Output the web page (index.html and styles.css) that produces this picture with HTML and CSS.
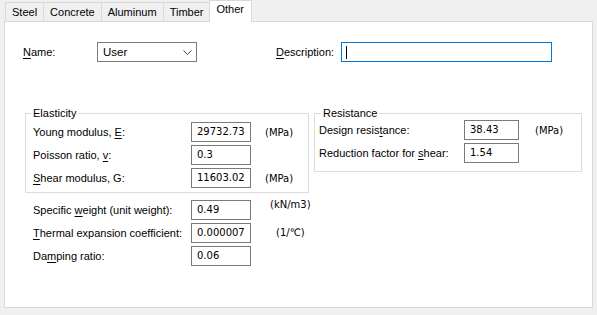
FILE: index.html
```html
<!DOCTYPE html>
<html>
<head>
  <title>Material</title>
  <link rel="stylesheet" href="styles.css">
</head>
<body>
  <div class="tabs">
    <div class="tab">Steel</div>
    <div class="tab">Concrete</div>
    <div class="tab">Aluminum</div>
    <div class="tab">Timber</div>
    <div class="tab active">Other</div>
  </div>

  <div class="panel">
    <div class="top-row">
      <label class="name-label"><u>N</u>ame:</label>
      <div class="select">
        <span>User</span>
        <svg width="9" height="5" viewBox="0 0 9 5"><polyline points="0.5,0.5 4.5,4.5 8.5,0.5" fill="none" stroke="#444" stroke-width="1"/></svg>
      </div>
      <label class="desc-label"><u>D</u>escription:</label>
      <div class="text-input focused"><span class="caret"></span></div>
    </div>

    <div class="groups">
      <fieldset class="group elasticity">
        <legend>Elasticity</legend>
        <div class="field">
          <label>Young modulus, <u>E</u>:</label>
          <div class="box">29732.73</div>
          <span class="unit">(MPa)</span>
        </div>
        <div class="field">
          <label>Poisson ratio, <u>v</u>:</label>
          <div class="box">0.3</div>
        </div>
        <div class="field">
          <label><u>S</u>hear modulus, G:</label>
          <div class="box">11603.02</div>
          <span class="unit">(MPa)</span>
        </div>
      </fieldset>

      <fieldset class="group resistance">
        <legend>Resistance</legend>
        <div class="field">
          <label>Design resis<u>t</u>ance:</label>
          <div class="box">38.43</div>
          <span class="unit">(MPa)</span>
        </div>
        <div class="field">
          <label>Reduction factor for <u>s</u>hear:</label>
          <div class="box">1.54</div>
        </div>
      </fieldset>
    </div>

    <div class="extra">
      <div class="field">
        <label>Specific <u>w</u>eight (unit weight):</label>
        <div class="box">0.49</div>
        <span class="unit unit-kn">(kN/m3)</span>
      </div>
      <div class="field">
        <label><u>T</u>hermal expansion coefficient:</label>
        <div class="box">0.000007</div>
        <span class="unit unit-temp">(1/℃)</span>
      </div>
      <div class="field">
        <label>Da<u>m</u>ping ratio:</label>
        <div class="box">0.06</div>
      </div>
    </div>
  </div>
</body>
</html>
```

FILE: styles.css
```css
body {
  margin: 0;
  background-color: #f0f0f0;
  font-family: "Liberation Sans", Arial, sans-serif;
  font-size: 11px;
  color: #000;
}

u {
  text-decoration-thickness: 1px;
  text-underline-offset: 2px;
}

/* Tabs */
.tabs {
  display: flex;
  align-items: flex-end;
  height: 21px;
  margin-left: 5px;
}

.tab {
  box-sizing: border-box;
  height: 19px;
  padding: 3px 6px 0 6px;
  border-top: 1px solid #d9d9d9;
  border-left: 1px solid #d9d9d9;
  background-color: #f0f0f0;
  font-size: 11px;
}

.tab.active {
  position: relative;
  z-index: 1;
  height: 22px;
  margin-bottom: -1px;
  padding: 2px 7px 0 6px;
  border-right: 1px solid #d9d9d9;
  background-color: #fff;
}

/* Panel */
.panel {
  box-sizing: border-box;
  width: 589px;
  height: 287px;
  margin-left: 4px;
  padding: 20px 0 0 18px;
  background-color: #fff;
  border: 1px solid #d9d9d9;
}

.top-row {
  display: flex;
  align-items: center;
  height: 20px;
}

.name-label {
  width: 74px;
}

.select {
  box-sizing: border-box;
  display: flex;
  align-items: center;
  justify-content: space-between;
  width: 100px;
  height: 20px;
  padding: 0 4px 0 5px;
  border: 1px solid #7a7a7a;
  font-size: 11.5px;
}

.desc-label {
  width: 65px;
  margin-left: 79px;
}

.text-input {
  box-sizing: border-box;
  display: flex;
  align-items: center;
  width: 211px;
  height: 20px;
  padding-left: 4px;
  border: 1px solid #7a7a7a;
}

.text-input.focused {
  border-color: #0078d7;
}

.caret {
  width: 1px;
  height: 13px;
  background-color: #000;
}

/* Group boxes */
.groups {
  display: flex;
  align-items: flex-start;
  margin-top: 44px;
}

.group {
  box-sizing: border-box;
  margin: 0;
  border: 1px solid #dcdcdc;
  min-width: 0;
}

.group legend {
  padding: 0 2px;
  line-height: 14px;
}

.elasticity {
  width: 284px;
  margin-left: 2px;
  padding: 2px 0 4px 7px;
}

.elasticity legend {
  margin-left: -2px;
}

.resistance {
  width: 268px;
  margin-left: 5px;
  padding: 0 0 8px 4px;
}

.resistance legend {
  margin-left: 2px;
}

.field {
  display: flex;
  align-items: center;
  height: 20px;
  margin-bottom: 3px;
}

.field:last-child {
  margin-bottom: 0;
}

.field label {
  width: 158px;
  flex-shrink: 0;
}

.resistance .field label {
  width: 145px;
}

.box {
  box-sizing: border-box;
  width: 60px;
  height: 20px;
  padding: 0 0 0 5px;
  border: 1px solid #7a7a7a;
  font-family: "DejaVu Sans", Tahoma, sans-serif;
  font-size: 10px;
  line-height: 18px;
}

.resistance .box {
  width: 55px;
}

.unit {
  margin-left: 14px;
  font-family: "DejaVu Sans", Tahoma, sans-serif;
  font-size: 10px;
}

.resistance .unit {
  margin-left: 16px;
}

/* Extra fields */
.extra {
  margin-top: 7px;
  padding-left: 10px;
}

.extra .field {
  height: 20px;
}

.unit-kn {
  align-self: flex-start;
  margin-left: 19px;
  margin-top: -1px;
}

.unit-temp {
  margin-left: 25px;
  margin-top: -2px;
}
```
